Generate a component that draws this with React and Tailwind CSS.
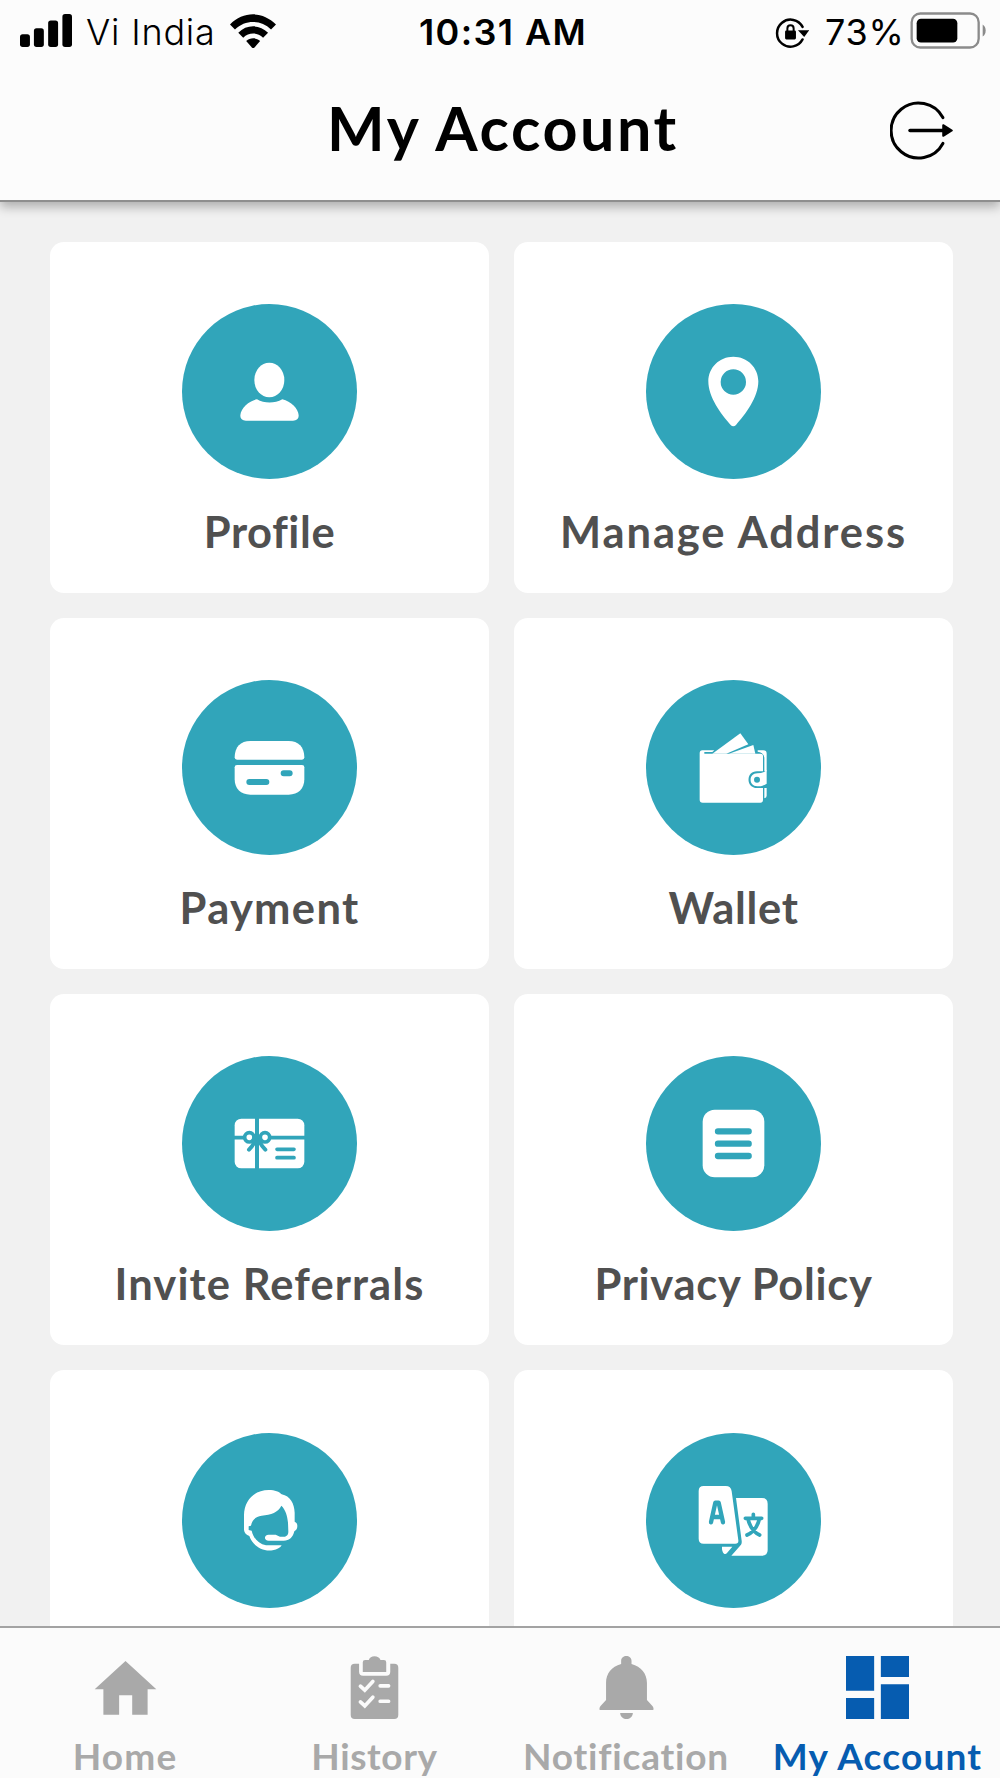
const TEAL = "#31a5ba";

const ProfileIcon = () => (
  <svg viewBox="37 43 525 525" className="w-full h-full" fill="white">
    <ellipse cx="299" cy="271" rx="45" ry="52" />
    <path d="M262 329 C284 342 315 342 338 329 C364 335 386 357 387 377 C387 388 381 393 370 393 H229 C218 393 212 388 212 377 C214 354 240 333 262 329 Z" />
  </svg>
);

const AddressIcon = () => (
  <svg viewBox="319 43 525 525" className="w-full h-full">
    <path
      fill="white"
      fillRule="evenodd"
      d="M581 201 C623 201 656 234 656 275 C656 322 618 374 589 406 C584 411 578 411 573 406 C544 374 506 322 506 275 C506 234 539 201 581 201 Z M581 239 A38 38 0 1 0 581 315 A38 38 0 1 0 581 239 Z"
    />
  </svg>
);

const PaymentIcon = () => (
  <svg viewBox="37 31 525 525" className="w-full h-full" fill="white">
    <path d="M195 263 C195 232 213 214 242 214 H357 C386 214 404 232 404 263 Q404 270 397 270 H202 Q195 270 195 263 Z" />
    <path d="M202 286 H397 Q404 286 404 293 V329 C404 357 386 375 357 375 H242 C213 375 195 357 195 329 V293 Q195 286 202 286 Z" />
    <path d="M239 337 H290 M342 311 H360" stroke={TEAL} strokeWidth="18" strokeLinecap="round" />
  </svg>
);

const WalletIcon = () => (
  <svg viewBox="19 31 525 525" className="w-full h-full" fill="white">
    <path d="M218 252 L302 191 L326 224 L260 252 Z" />
    <path d="M268 252 L341 226 L347 252 Z" />
    <path d="M188 242 Q180 242 180 251 V390 Q180 399 189 399 H362 Q370 399 370 390 V259 Q370 252 362 252 H194 V247 H218 L224 242 Z" />
    <path d="M354 242 H371 Q381 242 381 252 V378 Q381 385 374 386 V264 Q373 249 354 246 Z" />
    <path d="M386 305 H352 C318 305 318 355 352 355 H386 Z" fill={TEAL} />
    <path d="M381 301 Q372 311 353 311 C326 311 326 350 353 350 Q370 350 381 342 Z" />
    <circle cx="352" cy="330" r="9" fill={TEAL} />
  </svg>
);

const ReferralIcon = () => (
  <svg viewBox="37 50 525 525" className="w-full h-full">
    <rect x="195" y="238" width="209" height="149" rx="20" fill="white" />
    <g stroke={TEAL} fill="none" strokeWidth="11" strokeLinecap="round">
      <path d="M262 236 V389" strokeWidth="12" strokeLinecap="butt" />
      <path d="M193 295 H224 M300 295 H406" strokeLinecap="butt" />
      <circle cx="239" cy="294" r="14" fill="white" />
      <circle cx="286" cy="294" r="14" fill="white" />
      <path d="M258 303 C252 314 246 323 238 331 M267 303 C273 314 279 323 287 331" strokeWidth="12" />
      <circle cx="262" cy="300" r="10" fill={TEAL} />
      <path d="M322 330 H373 M322 355 H373" />
    </g>
  </svg>
);

const PolicyIcon = () => (
  <svg viewBox="19 50 525 525" className="w-full h-full">
    <rect x="189" y="211" width="185" height="203" rx="36" fill="white" />
    <path d="M235 276 H327 M235 313 H327 M235 350 H327" stroke={TEAL} strokeWidth="19" strokeLinecap="round" />
  </svg>
);

const SupportIcon = () => (
  <svg viewBox="37 39 525 525" className="w-full h-full" fill="white">
    <path d="M223 330 V285 C224 240 255 210 297 210 C316 210 329 215 336 223 C362 228 374 251 375 278 V305 Q383 308 383 318 Q383 329 374 334 C370 352 359 362 342 362 H297 C282 362 282 344 297 344 H318 L331 350 H343 C352 350 356 343 356 335 L355 308 C353 288 348 269 335 257 C326 277 304 284 276 287 C258 290 247 299 244 317 L237 319 V330 L246 332 C251 355 267 371 289 376 H336 Q330 387 309 391 C276 396 248 375 239 348 Q225 344 223 330 Z" />
  </svg>
);

const LanguageIcon = () => (
  <svg viewBox="19 39 525 525" className="w-full h-full" fill="white">
    <path d="M192 198 H258 Q274 198 276 214 L296 361 Q297 371 287 371 H192 Q177 371 177 356 V213 Q177 198 192 198 Z" />
    <path d="M289 234 H367 Q384 234 384 251 V390 Q384 407 367 407 H275 L304 374 Q307 370 306 362 Z" />
    <path d="M247 380 H278 L262 399 Q258 404 253 401 Q246 394 247 380 Z" />
    <g stroke={TEAL} fill="none" strokeWidth="13" strokeLinecap="round" strokeLinejoin="round">
      <path d="M214 307 L227 248 H237 L250 307 M220 291 H245" />
      <path d="M341 283 V294 M317 295 H366 M359 297 C353 322 341 337 322 345 M325 297 C331 322 342 337 360 345" strokeWidth="11" />
    </g>
  </svg>
);

const items = [
  { label: "Profile", icon: ProfileIcon, tracking: "tracking-[0.6px]" },
  { label: "Manage Address", icon: AddressIcon, tracking: "tracking-[1.9px]" },
  { label: "Payment", icon: PaymentIcon, tracking: "tracking-[1.3px]" },
  { label: "Wallet", icon: WalletIcon, tracking: "tracking-[0.7px]" },
  { label: "Invite Referrals", icon: ReferralIcon, tracking: "tracking-[1.1px]" },
  { label: "Privacy Policy", icon: PolicyIcon, tracking: "tracking-[0.7px]" },
  { icon: SupportIcon },
  { icon: LanguageIcon },
];

const HomeIcon = () => (
  <svg viewBox="282 166 188 188" className="w-[63px] h-[63px]" fill="currentColor">
    <path d="M376 181 L468 265 H442 V341 H396 V283 H357 V341 H310 V265 H284 Z" />
  </svg>
);

const HistoryIcon = () => (
  <svg viewBox="1030 166 188 188" className="w-[63px] h-[63px]">
    <path
      fill="currentColor"
      d="M1065 189 H1078 V213 Q1078 225 1090 225 H1159 Q1171 225 1171 213 V189 H1183 Q1195 189 1195 201 V342 Q1195 354 1183 354 H1065 Q1053 354 1053 342 V201 Q1053 189 1065 189 Z"
    />
    <path fill="currentColor" d="M1096 178 H1107 Q1111 167 1124 167 Q1137 167 1142 178 H1152 Q1159 178 1159 185 V214 H1089 V185 Q1089 178 1096 178 Z" />
    <path
      d="M1082 256 L1095 268 L1119 242 M1082 303 L1095 315 L1119 289 M1141 255 H1166 M1141 301 H1166"
      stroke="#fbfbfb"
      strokeWidth="11"
      strokeLinecap="round"
      fill="none"
    />
  </svg>
);

const BellIcon = () => (
  <svg viewBox="287 166 188 188" className="w-[63px] h-[63px]" fill="currentColor">
    <path d="M365 190 V181 C365 161 396 161 396 181 V190 C425 198 442 219 442 246 V297 L459 316 Q463 322 461 327 H301 Q299 322 303 316 L320 297 V246 C320 219 336 198 365 190 Z" />
    <path d="M362 336 H400 C398 360 364 360 362 336 Z" />
  </svg>
);

const DashboardIcon = () => (
  <svg viewBox="1039 166 188 188" className="w-[63px] h-[63px]" fill="currentColor">
    <path d="M1039 166 H1123 V270 H1039 Z M1143 166 H1227 V229 H1143 Z M1039 291 H1123 V354 H1039 Z M1143 250 H1227 V354 H1143 Z" />
  </svg>
);

const tabs = [
  { label: "Home", icon: HomeIcon, tracking: "tracking-[1.2px]" },
  { label: "History", icon: HistoryIcon, tracking: "tracking-[0.6px]" },
  { label: "Notification", icon: BellIcon, tracking: "tracking-[0.8px]" },
  { label: "My Account", icon: DashboardIcon, active: true, tracking: "tracking-[1.2px]" },
];

const StatusBar = () => (
  <div className="grid grid-cols-[1fr_auto_1fr] items-center h-16 pl-5 pr-[14px] font-['Inter',sans-serif] text-[36px] leading-[64px] text-black whitespace-nowrap">
    <div className="flex items-center">
      <svg viewBox="60 42 157 99" className="w-[52px] h-[33px] mt-[-3px]">
        <rect x="60" y="103" width="30" height="38" rx="8" />
        <rect x="102" y="85" width="30" height="56" rx="8" />
        <rect x="145" y="61" width="30" height="80" rx="8" />
        <rect x="188" y="42" width="29" height="99" rx="8" />
      </svg>
      <span className="ml-[14px] w-[130px] font-light tracking-[0.8px]">Vi India</span>
      <svg viewBox="690 43 139 104" className="ml-[14px] w-[46px] h-[35px] mt-[-1px]">
        <path d="M690 74 C730 33 789 33 829 74 L814 89 C783 59 736 59 705 89 Z" />
        <path d="M715 99 C740 73 780 73 805 99 L790 114 C773 97 747 97 730 114 Z" />
        <path d="M739 124 C751 113 769 113 781 124 L764 143 Q760 147 756 143 Z" />
      </svg>
    </div>
    <span className="font-semibold tracking-[1.4px]">10:31 AM</span>
    <div className="flex items-center justify-end">
      <svg viewBox="825 50 102 94" className="w-[34px] h-[31px]">
        <path d="M908 80 A41 41 0 1 0 908 118" fill="none" stroke="black" strokeWidth="7.5" strokeLinecap="round" />
        <path d="M894 90 H928 L913 111 Z" />
        <rect x="855" y="91" width="33" height="27" rx="4" />
        <path d="M862 94 V85 C862 72 881 72 881 85 V94" fill="none" stroke="black" strokeWidth="6" />
      </svg>
      <span className="ml-4 w-[78px] tracking-[0.8px]">73%</span>
      <svg viewBox="1231 37 228 110" className="ml-[7px] w-[76px] h-[37px] mt-[-3px]">
        <rect x="1236" y="41" width="201" height="102" rx="26" fill="none" stroke="#8b8b8b" strokeWidth="7" />
        <rect x="1251" y="57" width="122" height="71" rx="13" />
        <path d="M1449 74 Q1458 80 1458 92 Q1458 104 1449 110 Z" fill="#8b8b8b" />
      </svg>
    </div>
  </div>
);

const Header = () => (
  <header className="relative z-10 shrink-0 h-[202px] bg-[#fcfcfc] border-b-2 border-[#8e8e8e] shadow-[0_5px_10px_rgba(0,0,0,0.28)]">
    <StatusBar />
    <div className="grid grid-cols-[1fr_auto_1fr] items-center mt-[24px] h-20 pr-[46px]">
      <h1 className="col-start-2 ml-[52px] text-[61px] leading-[80px] font-bold text-black tracking-[2.6px] whitespace-nowrap">My Account</h1>
      <button className="justify-self-end mt-1">
        <svg viewBox="1170 301 192 178" className="w-16 h-[59px]">
          <path d="M1329 351 A83 83 0 1 0 1329 429" fill="none" stroke="black" strokeWidth="9" strokeLinecap="round" />
          <path d="M1230 390 H1335" stroke="black" strokeWidth="11" strokeLinecap="round" />
          <path d="M1330 374 L1356 390 L1330 406 Z" stroke="black" strokeWidth="6" strokeLinejoin="round" />
        </svg>
      </button>
    </div>
  </header>
);

const App = () => {
  return (
    <div className="flex flex-col w-[1000px] h-[1778px] overflow-hidden bg-[#f1f1f1] font-['Lato',sans-serif]">
      <Header />

      {/* Account menu */}
      <main className="flex-1 min-h-0 overflow-hidden pt-[39.5px] pl-[50px] pr-[47px]">
        <div className="grid grid-cols-2 gap-x-[25px] gap-y-[25.2px]">
          {items.map(({ label, icon: Icon, tracking }, index) => (
            <div key={index} className="flex flex-col items-center h-[351px] pt-[62.5px] bg-white rounded-[14px]">
              <div className="w-[175px] h-[175px] shrink-0 rounded-full bg-[#31a5ba]">
                <Icon />
              </div>
              {label && (
                <p className={`mt-[22px] text-[43.5px] leading-[60px] font-bold text-[#505050] whitespace-nowrap ${tracking}`}>{label}</p>
              )}
            </div>
          ))}
        </div>
      </main>

      {/* Bottom tabs */}
      <nav className="grid grid-cols-[250px_249px_254px_249px] shrink-0 h-[152px] bg-[#fbfbfb] border-t-2 border-[#a3a3a3]">
        {tabs.map(({ label, icon: Icon, active, tracking }) => (
          <a key={label} className={`flex flex-col items-center pt-[27.5px] ${active ? "text-[#065cb0]" : "text-[#a9a9a9]"}`}>
            <Icon />
            <span className={`mt-[12px] text-[37px] leading-[50px] font-bold whitespace-nowrap ${tracking}`}>{label}</span>
          </a>
        ))}
      </nav>
    </div>
  );
};

export default App;
